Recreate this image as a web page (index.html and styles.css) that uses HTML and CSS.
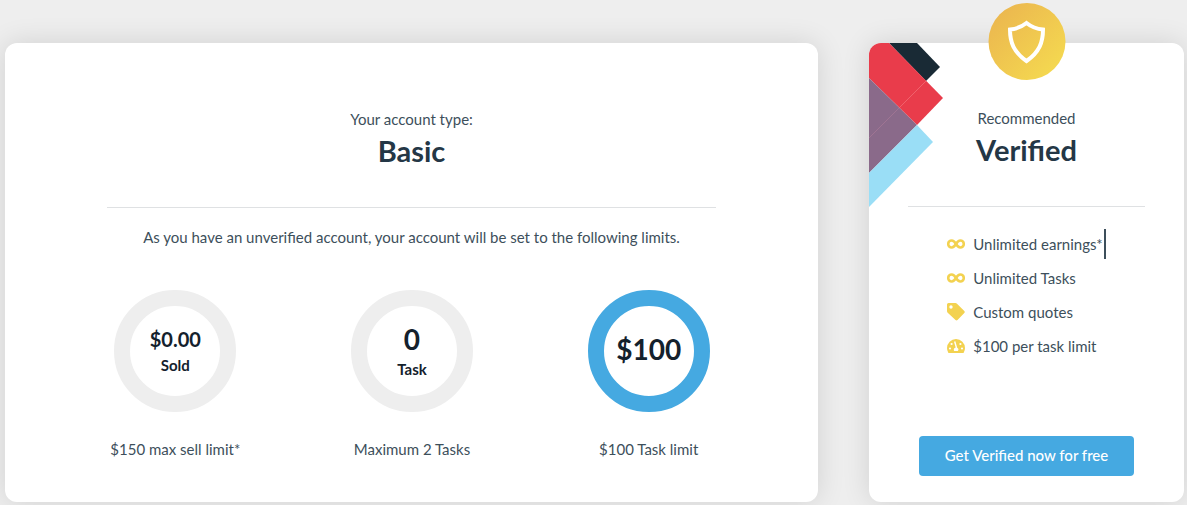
FILE: index.html
```
<!DOCTYPE html>
<html lang="en">
<head>
    <meta charset="UTF-8">
    <meta name="viewport" content="width=device-width, initial-scale=1.0">
    <title>Account Limits</title>
    <link rel="stylesheet" href="styles.css">
</head>
<body>
    <main class="account-page">
        <section class="card basic-card">
            <header class="card-header">
                <p>Your account type:</p>
                <h2>Basic</h2>
            </header>
            <p class="intro">As you have an unverified account, your account will be set to the following limits.</p>
            <div class="limits">
                <div class="limit">
                    <div class="ring">
                        <span class="ring-value medium">$0.00</span>
                        <span class="ring-label">Sold</span>
                    </div>
                    <p>$150 max sell limit*</p>
                </div>
                <div class="limit">
                    <div class="ring">
                        <span class="ring-value">0</span>
                        <span class="ring-label">Task</span>
                    </div>
                    <p>Maximum 2 Tasks</p>
                </div>
                <div class="limit">
                    <div class="ring full">
                        <span class="ring-value">$100</span>
                    </div>
                    <p>$100 Task limit</p>
                </div>
            </div>
        </section>
        <section class="card verified-card">
            <svg class="corner" width="76" height="166" viewBox="0 0 76 166" aria-hidden="true">
                <path d="M20 0H48L71 24L57 38Z" fill="#192a35"/>
                <path d="M0 0H20L74 55L48 82L0 35Z" fill="#e93c4b"/>
                <path d="M0 35L48 82L0 130Z" fill="#8a6a8a"/>
                <path d="M48 82L64 99L0 164V130Z" fill="#9adef6"/>
                <path d="M57 38L30 65" stroke="#f16c75" stroke-width=".8"/>
                <path d="M30 65L0 95" stroke="#a57795" stroke-width=".8"/>
            </svg>
            <div class="badge">
                <svg width="38" height="44" viewBox="0 0 38 44" fill="none" stroke="#fff" stroke-width="4" aria-hidden="true">
                    <path d="M19 3C14 7 9 9 2.500 9.500C2.500 22 6 32 19 41C32 32 35.500 22 35.500 9.500C29 9 24 7 19 3Z"/>
                </svg>
            </div>
            <header class="card-header">
                <p>Recommended</p>
                <h2>Verified</h2>
            </header>
            <ul class="features">
                <li>
                    <svg class="icon" viewBox="0 0 18 18" aria-hidden="true">
                        <path d="M9 9C7.500 6.500 6.400 5.500 4.700 5.500A3.500 3.500 0 0 0 4.700 12.500C6.400 12.500 7.500 11.500 9 9C10.500 6.500 11.600 5.500 13.300 5.500A3.500 3.500 0 0 1 13.300 12.500C11.600 12.500 10.500 11.500 9 9Z" fill="none" stroke="#f3d250" stroke-width="2.600"/>
                    </svg>
                    <span class="caret">Unlimited earnings*</span>
                </li>
                <li>
                    <svg class="icon" viewBox="0 0 18 18" aria-hidden="true">
                        <path d="M9 9C7.500 6.500 6.400 5.500 4.700 5.500A3.500 3.500 0 0 0 4.700 12.500C6.400 12.500 7.500 11.500 9 9C10.500 6.500 11.600 5.500 13.300 5.500A3.500 3.500 0 0 1 13.300 12.500C11.600 12.500 10.500 11.500 9 9Z" fill="none" stroke="#f3d250" stroke-width="2.600"/>
                    </svg>
                    <span>Unlimited Tasks</span>
                </li>
                <li>
                    <svg class="icon" viewBox="0 0 18 18" aria-hidden="true">
                        <path d="M1.500 0H8.500Q9.300 0 10 .7L17.300 8Q18.200 9 17.300 10L10.500 17Q9.500 17.900 8.500 17L.7 9.700Q0 9 0 8V1.500Q0 0 1.500 0ZM4 2.300A1.700 1.700 0 1 0 4 5.700A1.700 1.700 0 1 0 4 2.300Z" fill="#f3d250" fill-rule="evenodd"/>
                    </svg>
                    <span>Custom quotes</span>
                </li>
                <li>
                    <svg class="icon" viewBox="0 0 18 18" aria-hidden="true">
                        <path d="M9 2A9 9 0 0 0 0 11Q0 13.500 1.200 15.500Q1.500 16 2 16H16Q16.500 16 16.800 15.500Q18 13.500 18 11A9 9 0 0 0 9 2Z" fill="#f3d250"/>
                        <g fill="#fff">
                            <circle cx="3" cy="11.500" r="1.100"/>
                            <circle cx="4.600" cy="7" r="1.100"/>
                            <circle cx="13.400" cy="7" r="1.100"/>
                            <circle cx="15" cy="11.500" r="1.100"/>
                            <path d="M7 4.800L8.400 4.300L10.200 10.700A2.200 2.200 0 0 1 10.800 14H7.200A2.200 2.200 0 0 1 8.700 10.500Z"/>
                        </g>
                    </svg>
                    <span>$100 per task limit</span>
                </li>
            </ul>
            <button class="verify-button" type="button">Get Verified now for free</button>
        </section>
    </main>
</body>
</html>
```
FILE: styles.css
```
* {
    box-sizing: border-box;
}
body {
    margin: 0;
    background-color: #eee;
    color: #3d4f5b;
    font-family: Lato, "Noto Sans", sans-serif;
    font-size: 15px;
    line-height: 20px;
}
h2, p, ul {
    margin: 0;
}
.account-page {
    display: grid;
    grid-template-columns: 813fr 315fr;
    gap: 51px;
    min-height: 100vh;
    padding: 43px 3px 3px 5px;
}
.card {
    position: relative;
    display: flex;
    flex-direction: column;
    background-color: #fff;
    border-radius: 12px;
    box-shadow: 0 0 28px rgba(0,0,0,0.12);
    text-align: center;
}
.card-header {
    width: 75%;
    margin: 0 auto;
    padding: 66px 0 37px;
    border-bottom: 1px solid #dfe1e3;
}
.verified-card .card-header {
    padding-top: 65px;
}
.card-header h2 {
    margin-top: 3px;
    color: #243746;
    font-size: 29px;
    line-height: 38px;
}
.intro {
    margin-top: 19px;
}
.limits {
    display: grid;
    grid-template-columns: repeat(3, 1fr);
    margin: 43px 51px 0 52px;
}
.limit {
    display: flex;
    flex-direction: column;
    align-items: center;
    gap: 27px;
}
.ring {
    display: flex;
    flex-direction: column;
    align-items: center;
    justify-content: center;
    width: 122px;
    height: 122px;
    padding-bottom: 4px;
    border: 16px solid #eee;
    border-radius: 50%;
    color: #14212c;
    font-weight: bold;
}
.ring.full {
    border-color: #45a9e1;
}
.ring-value {
    font-size: 28px;
    line-height: 40px;
}
.ring-value.medium {
    font-size: 20px;
    line-height: 32px;
}
.ring-label {
    line-height: 20px;
}
.corner {
    position: absolute;
    top: 0;
    left: 0;
    border-top-left-radius: 12px;
}
.badge {
    position: absolute;
    top: -40px;
    left: 50%;
    display: flex;
    align-items: center;
    justify-content: center;
    width: 77px;
    height: 77px;
    border-radius: 50%;
    background: linear-gradient(135deg, #ecb94f 15%, #f4d750 85%);
    transform: translateX(-50%);
}
.features {
    display: flex;
    flex-direction: column;
    gap: 4px;
    align-self: center;
    padding: 0;
    margin-top: 22px;
    list-style: none;
    text-align: left;
}
.features li {
    display: flex;
    align-items: center;
    gap: 8px;
    line-height: 30px;
}
.icon {
    width: 18px;
    height: 18px;
}
.caret {
    padding-right: 1px;
    border-right: 2px solid #3d4f5b;
}
.verify-button {
    align-self: center;
    width: 68%;
    height: 40px;
    margin: auto 0 26px;
    padding: 0 0 2px;
    border: none;
    border-radius: 4px;
    background-color: #45a9e1;
    color: #fff;
    font-family: inherit;
    font-size: 15px;
    font-weight: 500;
    cursor: pointer;
}
```
